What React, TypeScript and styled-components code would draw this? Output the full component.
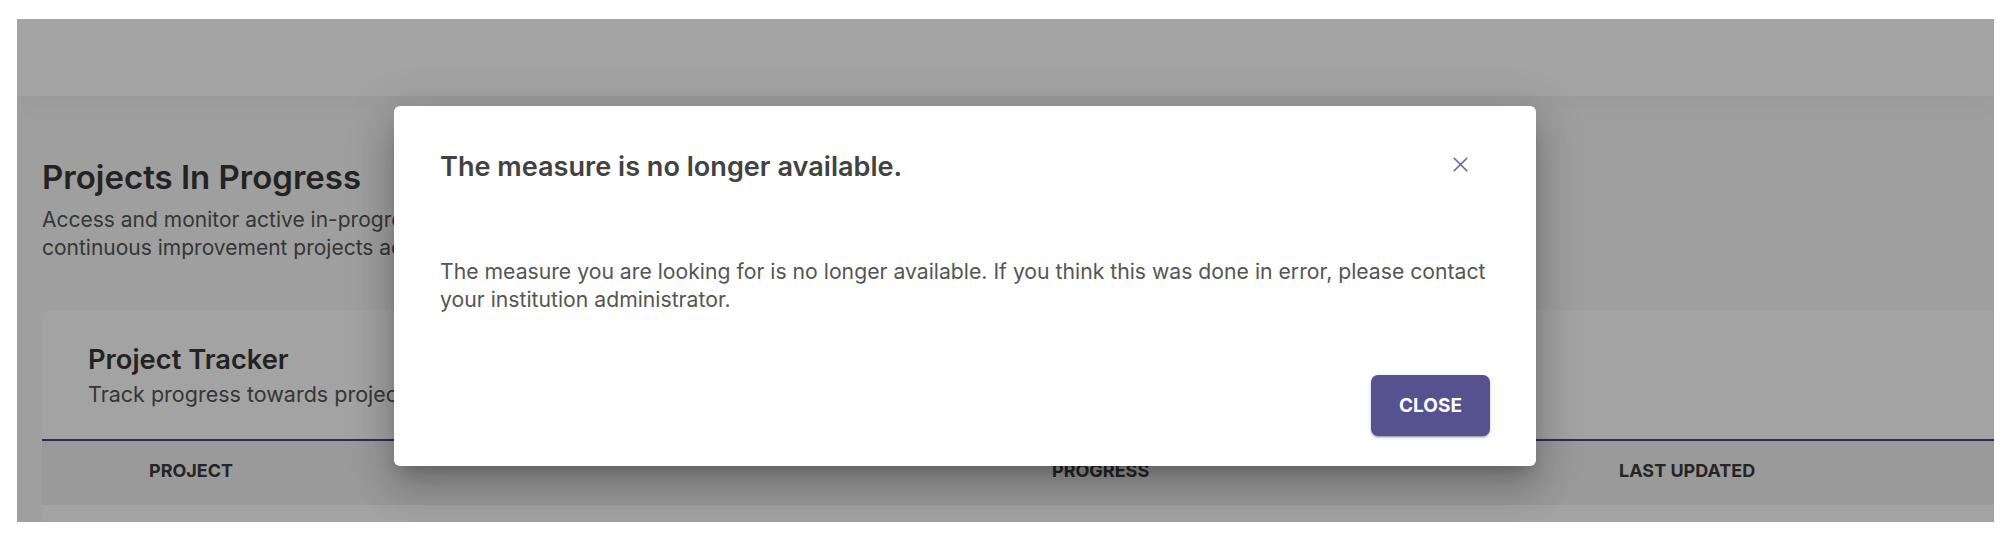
import React from "react";
import styled, { createGlobalStyle } from "styled-components";

const GlobalStyle = createGlobalStyle`
  html, body { margin: 0; padding: 0; background: #ffffff; }
  body { font-family: Inter, "Noto Sans", Arial, sans-serif; }
  * { box-sizing: border-box; }
`;

const Page = styled.div`
  padding: 19px 16px 18px 17px;
  background: #ffffff;
`;

const Frame = styled.div`
  position: relative;
  width: 1977px;
  height: 503px;
  overflow: hidden;
  background: #f9f9f9;
  display: flex;
  flex-direction: column;
`;

const TopBar = styled.header`
  flex: 0 0 77px;
  background: #ffffff;
  box-shadow: 0 2px 30px rgba(0, 0, 0, 0.05);
  position: relative;
  z-index: 1;
`;

const Main = styled.main`
  flex: 1;
  padding: 61px 0 0 25px;
  display: flex;
  flex-direction: column;
`;

const PageTitle = styled.h1`
  margin: 0;
  font-size: 33px;
  line-height: 40px;
  font-weight: 600;
  color: #383838;
`;

const PageDesc = styled.p`
  margin: 9px 0 0;
  font-size: 21px;
  line-height: 27.5px;
  color: #555555;
`;

const Card = styled.section`
  margin-top: 49px;
  background: #ffffff;
  border-radius: 8px 0 0 0;
  flex: 1;
  display: flex;
  flex-direction: column;
`;

const CardHead = styled.div`
  padding: 34px 46px 31px;
  border-bottom: 2px solid #4a4580;
`;

const CardTitle = styled.h2`
  margin: 0;
  font-size: 27.3px;
  line-height: 32px;
  font-weight: 600;
  color: #383838;
`;

const CardSub = styled.p`
  margin: 4px 0 0;
  font-size: 21.5px;
  line-height: 28px;
  color: #555555;
`;

const HeadRow = styled.div`
  display: grid;
  grid-template-columns: 903px 567px 1fr;
  align-items: center;
  height: 64px;
  padding: 0 0 6px 107px;
  background: #f1f1f3;
`;

const HeadCell = styled.div`
  font-size: 18px;
  font-weight: 700;
  color: #3a3a3a;
  text-transform: uppercase;
`;

const Backdrop = styled.div`
  position: absolute;
  inset: 0;
  z-index: 10;
  background: rgba(0, 0, 0, 0.36);
  display: flex;
  align-items: flex-start;
  padding: 87px 0 0 377px;
`;

const Dialog = styled.div`
  width: 1142px;
  background: #ffffff;
  border-radius: 6px;
  padding: 45px 46px 30px;
  display: flex;
  flex-direction: column;
  box-shadow: 0px 11px 15px -7px rgba(0, 0, 0, 0.2),
    0px 24px 38px 3px rgba(0, 0, 0, 0.14),
    0px 9px 46px 8px rgba(0, 0, 0, 0.12);
`;

const DialogHead = styled.div`
  display: flex;
  align-items: center;
  justify-content: space-between;
  height: 32px;
`;

const DialogTitle = styled.h2`
  margin: 0;
  font-size: 27.1px;
  line-height: 32px;
  font-weight: 600;
  color: #424242;
`;

const IconButton = styled.button`
  width: 60px;
  height: 60px;
  margin: -17px 0 -11px;
  border: none;
  background: transparent;
  padding: 0;
  display: flex;
  align-items: center;
  justify-content: center;
  cursor: pointer;
`;

const DialogBody = styled.p`
  margin: 74px 0 0;
  font-size: 21.2px;
  line-height: 28px;
  color: #555555;
`;

const Actions = styled.div`
  margin-top: 62px;
  display: flex;
  justify-content: flex-end;
`;

const PrimaryButton = styled.button`
  width: 119px;
  height: 61px;
  border: none;
  border-radius: 7px;
  background: #56518f;
  color: #ffffff;
  font-family: Inter, "Noto Sans", Arial, sans-serif;
  font-size: 19px;
  font-weight: 700;
  text-transform: uppercase;
  cursor: pointer;
  box-shadow: 0px 3px 1px -2px rgba(0, 0, 0, 0.2),
    0px 2px 2px 0px rgba(0, 0, 0, 0.14),
    0px 1px 5px 0px rgba(0, 0, 0, 0.12);
`;

export default function App() {
  return (
    <Page>
      <GlobalStyle />
      <Frame>
        <TopBar />
        <Main>
          <PageTitle>Projects In Progress</PageTitle>
          <PageDesc>
            Access and monitor active in-progress assessment, program review and
            <br />
            continuous improvement projects across your institution.
          </PageDesc>
          <Card>
            <CardHead>
              <CardTitle>Project Tracker</CardTitle>
              <CardSub>Track progress towards project completion.</CardSub>
            </CardHead>
            <HeadRow>
              <HeadCell>Project</HeadCell>
              <HeadCell>Progress</HeadCell>
              <HeadCell>Last Updated</HeadCell>
            </HeadRow>
          </Card>
        </Main>
        <Backdrop>
          <Dialog role="dialog">
            <DialogHead>
              <DialogTitle>The measure is no longer available.</DialogTitle>
              <IconButton aria-label="close">
                <svg width="15" height="15" viewBox="0 0 15 15">
                  <path
                    d="M1.2 1.2 L13.8 13.8 M13.8 1.2 L1.2 13.8"
                    stroke="#6a62a2"
                    strokeWidth="1.6"
                    strokeLinecap="round"
                  />
                </svg>
              </IconButton>
            </DialogHead>
            <DialogBody>
              The measure you are looking for is no longer available. If you think
              this was done in error, please contact your institution administrator.
            </DialogBody>
            <Actions>
              <PrimaryButton>Close</PrimaryButton>
            </Actions>
          </Dialog>
        </Backdrop>
      </Frame>
    </Page>
  );
}
